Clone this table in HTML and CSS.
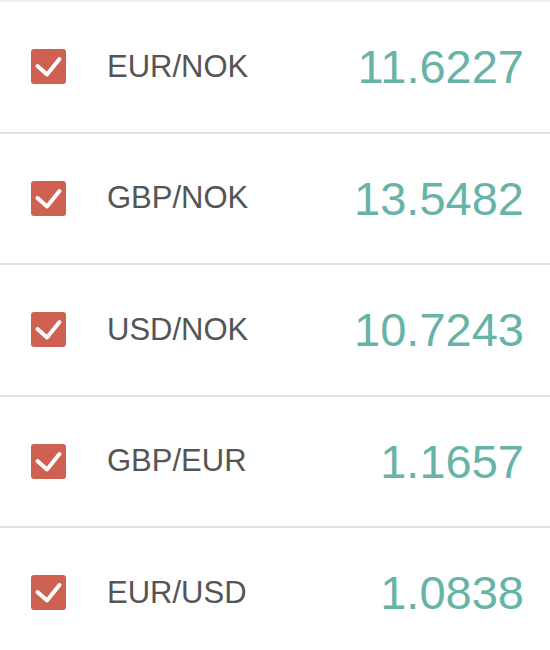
FILE: index.html
```html
<!DOCTYPE html>
<html>
<head>
<meta charset="utf-8">
<link rel="stylesheet" href="styles.css">
</head>
<body>
<ul class="list">
  <li class="row">
    <span class="check"><svg viewBox="0 0 35 35" width="35" height="35"><polyline points="6.5,17 16,25.5 28.5,10" /></svg></span>
    <span class="pair">EUR/NOK</span>
    <span class="rate">11.6227</span>
  </li>
  <li class="row">
    <span class="check"><svg viewBox="0 0 35 35" width="35" height="35"><polyline points="6.5,17 16,25.5 28.5,10" /></svg></span>
    <span class="pair">GBP/NOK</span>
    <span class="rate">13.5482</span>
  </li>
  <li class="row">
    <span class="check"><svg viewBox="0 0 35 35" width="35" height="35"><polyline points="6.5,17 16,25.5 28.5,10" /></svg></span>
    <span class="pair">USD/NOK</span>
    <span class="rate">10.7243</span>
  </li>
  <li class="row">
    <span class="check"><svg viewBox="0 0 35 35" width="35" height="35"><polyline points="6.5,17 16,25.5 28.5,10" /></svg></span>
    <span class="pair">GBP/EUR</span>
    <span class="rate">1.1657</span>
  </li>
  <li class="row">
    <span class="check"><svg viewBox="0 0 35 35" width="35" height="35"><polyline points="6.5,17 16,25.5 28.5,10" /></svg></span>
    <span class="pair">EUR/USD</span>
    <span class="rate">1.0838</span>
  </li>
</ul>
</body>
</html>
```
FILE: styles.css
```css
html, body {
  margin: 0;
  padding: 0;
  background: #ffffff;
  font-family: "Liberation Sans", Arial, sans-serif;
}
.list {
  list-style: none;
  margin: 0;
  padding: 0;
  border-top: 2px solid #f0f0f0;
}
.row {
  display: flex;
  align-items: center;
  height: 129.5px;
  padding: 0 26px 0 31px;
  border-bottom: 2px solid #e2e2e2;
}
.check {
  display: flex;
  width: 35px;
  height: 35px;
  border-radius: 3px;
  background: #cf6152;
  flex-shrink: 0;
}
.check polyline {
  fill: none;
  stroke: #ffffff;
  stroke-width: 4;
  stroke-linecap: round;
  stroke-linejoin: round;
}
.pair {
  margin-left: 41px;
  font-size: 31px;
  color: #555555;
}
.rate {
  margin-left: auto;
  font-size: 47px;
  color: #67b3a7;
}
```
